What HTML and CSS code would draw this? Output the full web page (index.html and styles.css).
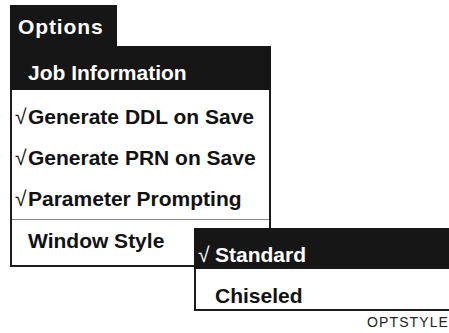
FILE: index.html
```html
<!DOCTYPE html>
<html>
    <head>
        <title>Options</title>
        <link rel="stylesheet" href="styles.css">
    </head>
    <body>
        <div class="menubar">
            <div class="tab">Options</div>
        </div>
        <div class="menu">
            <div class="menu-head">Job Information</div>
            <ul class="items">
                <li><span class="check">&radic;</span>Generate DDL on Save</li>
                <li><span class="check">&radic;</span>Generate PRN on Save</li>
                <li><span class="check">&radic;</span>Parameter Prompting</li>
                <li class="sep plain">Window Style</li>
            </ul>
        </div>

        <div class="submenu-wrap">
            <div class="submenu">
                <div class="sub-head"><span class="check">&radic;</span>Standard</div>
                <div class="sub-item">Chiseled</div>
            </div>
            <div class="caption">OPTSTYLE</div>
        </div>
    </body>
</html>
```

FILE: styles.css
```css
body {
    margin: 0;
    background: #fff;
    font-family: "Liberation Sans", Arial, sans-serif;
    font-weight: bold;
    font-size: 21px;
    color: #111;
}
.menubar {
    padding: 5px 0 0 10px;
}
.tab {
    display: inline-block;
    vertical-align: top;
    width: 99px;
    height: 38px;
    padding: 3px 0 0 8px;
    line-height: 38px;
    background: #161616;
    color: #fff;
    letter-spacing: 0.9px;
}
.menu {
    margin-left: 10px;
    width: 261px;
    box-sizing: border-box;
    background: #fff;
    border: 2px solid #1c1c1c;
    border-top: none;
    padding-bottom: 4px;
}
.menu-head {
    margin: 0 -2px;
    height: 34px;
    padding: 10px 0 0 18px;
    line-height: 34px;
    background: #161616;
    color: #fff;
}
.items {
    list-style: none;
    margin: 0;
    padding: 6px 0 0 0;
}
.items li {
    height: 41px;
    line-height: 41px;
    padding-left: 3px;
    white-space: nowrap;
}
.items li.plain {
    padding-left: 16px;
}
.items li.sep {
    border-top: 1px solid #8a8a8a;
}
.check {
    display: inline-block;
    width: 13px;
    font-weight: normal;
}
.submenu-wrap {
    position: absolute;
    left: 194px;
    top: 228px;
    right: 0;
}
.submenu {
    background: #fff;
    border-left: 2px solid #1c1c1c;
    border-bottom: 2px solid #1c1c1c;
}
.sub-head {
    margin-left: -2px;
    height: 29px;
    padding: 12px 0 0 4px;
    line-height: 29px;
    background: #161616;
    color: #fff;
}
.sub-head .check {
    width: 17px;
}
.sub-item {
    height: 26px;
    padding: 14px 0 0 19px;
    line-height: 26px;
}
.caption {
    margin-top: 3px;
    text-align: right;
    font-weight: normal;
    font-size: 14px;
    line-height: 16px;
    letter-spacing: 1.1px;
    color: #222;
}
```
